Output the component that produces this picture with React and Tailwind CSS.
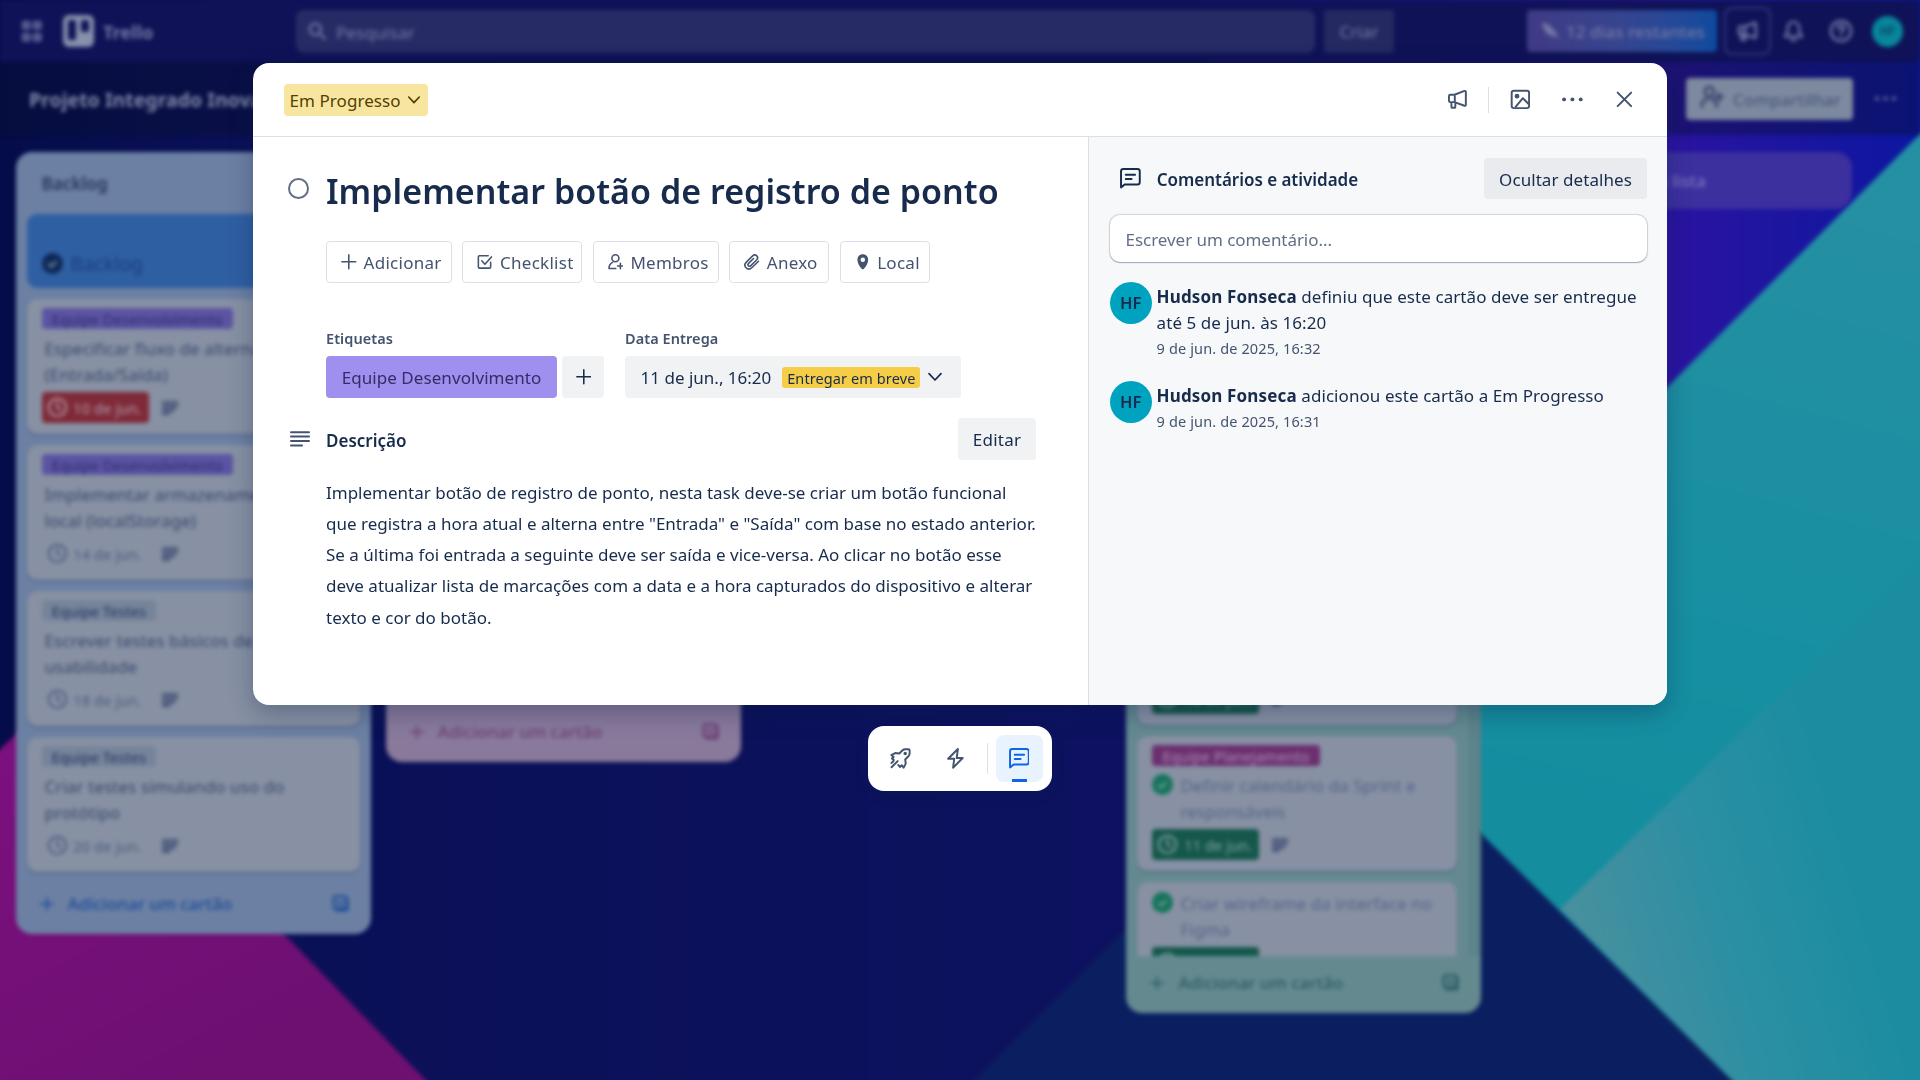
import React from "react";

const svgBase = { fill: "none", stroke: "currentColor", strokeLinecap: "round", strokeLinejoin: "round" };

function Icon({ className = "size-[20.8px]", w = 1.5, children }) {
  return (
    <svg viewBox="0 0 16 16" strokeWidth={w} className={`shrink-0 ${className}`} {...svgBase}>
      {children}
    </svg>
  );
}

const Plus = (p) => <Icon {...p}><path d="M8 .9v14.2M.9 8h14.2" /></Icon>;
const Chevron = (p) => <Icon {...p}><path d="M2 4.6 8 11l6-6.4" /></Icon>;
const Megaphone = (p) => (
  <Icon {...p}>
    <path d="M2.6 4.4h3.2l7.6-2.9c.6-.2 1.1.1 1.1.7v10c0 .6-.5.9-1.1.7l-7.6-2.8H2.6c-.6 0-1.1-.5-1.1-1.1V5.5c0-.6.5-1.1 1.1-1.1ZM6 4.4v5.7M3.4 10.3v3.5c0 .4.3.7.7.7h1.6c.4 0 .7-.3.7-.7v-3.3" />
  </Icon>
);
const Picture = (p) => (
  <Icon {...p}>
    <rect x="1.3" y="1.3" width="13.4" height="13.4" rx="1.6" />
    <circle cx="5.4" cy="5.5" r="1.1" fill="currentColor" />
    <path d="m4 14.2 5.9-7.1 4.6 4.6" strokeLinecap="butt" />
  </Icon>
);
const Dots = (p) => (
  <Icon {...p}>
    <g fill="currentColor" stroke="none">
      <circle cx="1.6" cy="8" r="1.5" /><circle cx="8" cy="8" r="1.5" /><circle cx="14.4" cy="8" r="1.5" />
    </g>
  </Icon>
);
const Close = (p) => <Icon {...p}><path d="m2.8 2.8 10.4 10.4M13.2 2.8 2.8 13.2" /></Icon>;
const Comment = (p) => (
  <Icon {...p}>
    <path d="M.8 14.9V2.6c0-1 .8-1.8 1.8-1.8h10.8c1 0 1.8.8 1.8 1.8v8.3c0 1-.8 1.8-1.8 1.8H3.6L.8 14.9ZM4.4 5.2h7.2M4.4 8.4h4.5" />
  </Icon>
);
const CheckSquare = (p) => (
  <Icon {...p}>
    <path d="M14 8.6v4.7c0 .7-.5 1.2-1.2 1.2H2.6c-.7 0-1.2-.5-1.2-1.2V2.9c0-.7.5-1.2 1.2-1.2h8.9M4.9 7l3.2 3.5L14.8 3" />
  </Icon>
);
const MemberAdd = (p) => (
  <Icon {...p}>
    <circle cx="7.6" cy="4.4" r="3.6" />
    <path d="M8 14.9H1c0-3 1-5 3.6-6.3M12.7 9.4v5.8M9.8 12.3h5.8" />
  </Icon>
);
const Invite = (p) => (
  <Icon {...p}>
    <path d="M6.2 1.2c1.700 0 2.900 1.300 2.900 3.100S7.900 7.900 6.200 7.900 3.300 6.100 3.300 4.300s1.200-3.100 2.900-3.100ZM1.200 14.500c0-3 1.600-4.600 3.400-4.900M11.200 14.500c0-3-1.600-4.600-3.400-4.900M12.700 5.500v5M10.400 8h4.700" />
  </Icon>
);
const Clip = (p) => (
  <Icon {...p}>
    <path d="m14.9 7.4-6.6 6.4c-2 1.9-4.6 1.9-6.2.3-1.6-1.6-1.5-4 .3-5.8l6.2-6.1c1.4-1.4 3.3-1.4 4.5-.3 1.2 1.2 1.1 3-.2 4.3l-5.8 5.7c-.8.8-1.9.8-2.6.2-.7-.7-.6-1.7.2-2.5l5.1-5" />
  </Icon>
);
const Pin = (p) => (
  <Icon {...p}>
    <path fill="currentColor" stroke="none" fillRule="evenodd" d="M8 .3c3.100 0 5.500 2.300 5.500 5.500 0 3.800-2.500 7.400-4.600 9.500-.5.500-1.300.5-1.800 0C5 13.200 2.500 9.600 2.500 5.800 2.500 2.600 4.900.3 8 .3Zm0 3.200a2.300 2.300 0 1 0 0 4.600 2.300 2.300 0 0 0 0-4.600Z" />
  </Icon>
);
const Rocket = (p) => (
  <Icon {...p}>
    <path d="M2.900 9.300 1.500 8.100 2.800 6.900 1 5.400 4 3.900l3.100.3 2.600-2.500c.6-.6 1.300-.8 2.100-.8h2.300c.6 0 1 .4 1 1v2.100c0 .9-.3 1.700-.9 2.300l-2.500 2.500.4 3.200-1.600 3.100-1.500-1.900-1.300 1.400-1.300-1.500M1.200 14.800l4.700-4.700M1.100 11.600l1.600-1.600" />
    <circle cx="11.700" cy="4.300" r=".6" fill="currentColor" />
  </Icon>
);
const Bolt = (p) => <Icon {...p}><path d="M9.900.8 2.400 8.300h4.700l-.9 6.900 7.400-7.500H9L9.900.8Z" /></Icon>;
const Clock = (p) => <Icon {...p}><circle cx="8" cy="8" r="6.700" /><path d="M8 4v4.200l2.200 1.500" /></Icon>;
const Template = (p) => (
  <Icon {...p}>
    <rect x="1.500" y="1.500" width="12" height="11" rx="1.500" />
    <path d="M4 14.300h9.500c.6 0 1-.4 1-1V4M5 6.800l2.500 1.200L10 6.800" />
  </Icon>
);
const Done = ({ className }) => (
  <svg viewBox="0 0 16 16" className={`size-[21px] shrink-0 ${className}`}>
    <circle cx="8" cy="8" r="8" fill="currentColor" />
    <path d="m4.800 8.200 2.300 2.200 4-4.300" fill="none" stroke="#7f9fa0" strokeWidth="1.400" />
  </svg>
);

/* ---------- board behind the dialog ---------- */

function Wallpaper() {
  return (
    <svg className="absolute -left-5 -top-5 h-[1120px] w-[1960px] blur-[2px]" viewBox="-20 -20 1960 1120" aria-hidden="true">
      <defs>
        <linearGradient id="navy" x1="0" y1="0" x2="1" y2="0">
          <stop offset="0" stopColor="#040c48" />
          <stop offset=".12" stopColor="#0a1055" />
          <stop offset=".5" stopColor="#0d125e" />
          <stop offset=".75" stopColor="#0e1166" />
        </linearGradient>
        <linearGradient id="violet" x1="1340" y1="0" x2="1920" y2="0" gradientUnits="userSpaceOnUse">
          <stop offset="0" stopColor="#1b1182" />
          <stop offset=".55" stopColor="#2b14a0" />
          <stop offset="1" stopColor="#0c17a0" />
        </linearGradient>
        <linearGradient id="magenta" x1="0" y1="700" x2="200" y2="1080" gradientUnits="userSpaceOnUse">
          <stop offset="0" stopColor="#7e1080" />
          <stop offset="1" stopColor="#6d1072" />
        </linearGradient>
        <linearGradient id="teal" x1="1800" y1="200" x2="1620" y2="860" gradientUnits="userSpaceOnUse">
          <stop offset="0" stopColor="#258fa3" />
          <stop offset=".7" stopColor="#168fa2" />
          <stop offset="1" stopColor="#148d9f" />
        </linearGradient>
        <linearGradient id="teal2" x1="1580" y1="920" x2="1850" y2="840" gradientUnits="userSpaceOnUse">
          <stop offset="0" stopColor="#46909f" />
          <stop offset=".5" stopColor="#2b8fa3" />
          <stop offset="1" stopColor="#1b8da1" />
        </linearGradient>
      </defs>
      <rect x="-20" y="-20" width="1960" height="1120" fill="url(#navy)" />
      <path d="M1200-20h740v140L1300 760Z" fill="url(#violet)" />
      <path d="M-20 768 55 698 445 1100H-20Z" fill="url(#magenta)" />
      <path d="M955 1100 1350 705 1760 1100Z" fill="#0b1f60" />
      <path d="M1940 114 1350 705 1752 1100H1940Z" fill="url(#teal)" />
      <path d="M1940 538 1560 909 1752 1100H1940Z" fill="url(#teal2)" />
    </svg>
  );
}

function TopBar() {
  return (
    <header className="flex h-[62px] w-full shrink-0 items-center bg-[#0f1257] text-[#7377a4]">
      <svg viewBox="0 0 20 21" className="ml-[22px] h-[21px] w-5 shrink-0" fill="none" stroke="currentColor" strokeWidth="2.600">
        <rect x="1.500" y="1.500" width="5.500" height="5.500" /><rect x="12.500" y="1.500" width="5.500" height="5.500" />
        <rect x="1.500" y="13.500" width="5.500" height="5.500" /><rect x="12.500" y="13.500" width="5.500" height="5.500" />
      </svg>
      <div className="ml-[21px] flex h-[32px] w-[31px] justify-between rounded-[6px] bg-[#8890ac] p-[5px]">
        <div className="h-[20px] w-[8px] rounded-[2px] bg-[#111457]" />
        <div className="h-[12px] w-[8px] rounded-[2px] bg-[#111457]" />
      </div>
      <div className="ml-[9px] w-[193px] pt-[1px] text-[18px] font-bold">Trello</div>
      <div className="flex h-[43px] w-[1019px] items-center gap-[10px] rounded-[8px] bg-[#272b65] pl-[12px]">
        <svg viewBox="0 0 16 16" className="size-[18px]" strokeWidth="2" {...svgBase}><circle cx="6.500" cy="6.500" r="5" /><path d="m10.500 10.500 4.500 4.500" /></svg>
        <span className="pt-[3px]">Pesquisar</span>
      </div>
      <div className="ml-[9px] flex h-[43px] w-[70px] items-center justify-center rounded-[4px] bg-[#252961] pt-[2px]">Criar</div>
      <div className="ml-[133px] flex h-[42px] w-[190px] items-center gap-[6px] rounded-[4px] bg-linear-to-r from-[#403a85] via-[#35458f] to-[#0c4b9f] pl-[15px]">
        <svg viewBox="0 0 16 16" className="size-[18px]" fill="currentColor"><path d="M0 1c3-.5 8 2 10 6l3 1-1 2 4 5-6-2.500C4 12 1 6 0 1Z" /></svg>
        <span className="pt-[2px] font-medium">12 dias restantes</span>
      </div>
      <div className="ml-[7px] flex h-[48px] w-[47px] items-center justify-center rounded-[8px] border-2 border-[#34357f]">
        <Megaphone w={2} />
      </div>
      <svg viewBox="0 0 16 16" className="ml-[11px] size-[23px]" strokeWidth="1.700" {...svgBase}><path d="M8 1.300c-2.600 0-4 2-4 4.200v2.700L2 11.500h12l-2-3.300V5.500c0-2.200-1.400-4.200-4-4.200ZM6.500 14h3" /></svg>
      <svg viewBox="0 0 16 16" className="ml-[24px] size-[24px]" strokeWidth="1.700" {...svgBase}><circle cx="8" cy="8" r="6.700" /><path d="M6 6.300c0-2.600 4-2.400 4 0C10 7.800 8 7.800 8 9.300M8 11.600v.2" /></svg>
      <div className="ml-[19px] flex size-[31px] items-center justify-center rounded-full bg-[#08869b] text-[12px] font-semibold text-[#0c3f66]">HF</div>
    </header>
  );
}

function BoardBar() {
  return (
    <div className="flex h-[73px] w-full shrink-0 items-center bg-[#070f30]/40">
      <div className="ml-[29px] w-[1657px] pt-[3px] text-[19.400px] font-bold text-[#8289aa]">Projeto Integrado Inovador</div>
      <div className="flex h-[42px] w-[167px] items-center gap-[9px] rounded-[4px] bg-[#7d899f] pl-[14px] text-[#4a5878]">
        <Invite className="mb-[4px] size-[24px] text-[#33416a]" w={1.800} />
        <span className="pt-[3px] font-medium tracking-normal">Compartilhar</span>
      </div>
      <Dots className="ml-[22px] size-[21px] text-[#7377a4]" />
    </div>
  );
}

function Due({ tone = "", text }) {
  return (
    <div className="flex items-center">
      <div className={`flex h-[31px] w-[107px] items-center gap-[6px] rounded-[4px] pl-[5px] text-[14.500px] tracking-[0.010em] ${tone}`}>
        <Clock className="size-[20.800px]" /> {text}
      </div>
      <svg viewBox="0 0 16 14" className="ml-[13px] h-[14px] w-4 text-[#3f4d73]" stroke="currentColor" strokeWidth="2.600"><path d="M0 1.500h16M0 5.300h16M0 9.100h13M0 12.700h8" /></svg>
    </div>
  );
}

function Card({ tag, tagTone, lines, due, dueTone, done }) {
  return (
    <div className="h-[135px] shrink-0 rounded-[10px] bg-[#8791a3] pl-[15px] pt-[9px] shadow-[0_1px_2px_#44557d]">
      {tag && <div className={`mb-[7px] flex h-[21px] w-fit items-center rounded-[4px] px-[10px] text-[14.500px] tracking-[0.008em] ${tagTone}`}>{tag}</div>}
      <div className={`flex gap-[7px] leading-[26px] text-[#3b496f] ${done ? "" : "pl-[3px]"}`}>
        {done && <Done className="mt-[1px] text-[#14745b]" />}
        <div className={done ? "text-[#56648a]" : ""}>{lines.map((l) => <div key={l}>{l}</div>)}</div>
      </div>
      <div className="mt-[4px]"><Due text={due} tone={dueTone} /></div>
    </div>
  );
}

function AddCard({ tone }) {
  return (
    <div className={`flex shrink-0 items-center pl-[24px] pr-[22px] font-medium ${tone}`}>
      <Plus className="size-[14px]" w={2} />
      <span className="ml-[14px] flex-1 pt-[1px] tracking-normal">Adicionar um cartão</span>
      <Template className="size-[17px]" w={2.300} />
    </div>
  );
}

const backlog = [
  { tag: "Equipe Desenvolvimento", tagTone: "bg-[#5c54a3] text-[#2e2a6c]", lines: ["Especificar fluxo de alternância", "(Entrada/Saída)"], due: "10 de jun.", dueTone: "bg-[#7f2a39] text-[#b49aa8]" },
  { tag: "Equipe Desenvolvimento", tagTone: "bg-[#5c54a3] text-[#2e2a6c]", lines: ["Implementar armazenamento", "local (localStorage)"], due: "14 de jun.", dueTone: "text-[#4d5b7f]" },
  { tag: "Equipe Testes", tagTone: "bg-[#76849b] text-[#24355f]", lines: ["Escrever testes básicos de", "usabilidade"], due: "18 de jun.", dueTone: "text-[#4d5b7f]" },
  { tag: "Equipe Testes", tagTone: "bg-[#76849b] text-[#24355f]", lines: ["Criar testes simulando uso do", "protótipo"], due: "20 de jun.", dueTone: "text-[#4d5b7f]" },
];

const finished = [
  { tag: "Equipe Planejamento", lines: ["Definir escopo do", "projeto"], due: "10 de jun." },
  { tag: "Equipe Planejamento", lines: ["Definir calendário da Sprint e", "responsáveis"], due: "11 de jun." },
  { lines: ["Criar wireframe da interface no", "Figma"], due: "" },
];

function Board() {
  return (
    <main className="flex flex-1 items-start gap-[15.300px] pl-[15.500px] pt-[17px]">
      <section className="flex h-[782px] w-[355px] shrink-0 flex-col rounded-[16px] bg-[#6c80a3]">
        <div className="flex h-[62px] shrink-0 items-center pl-[26px] pt-[2px] font-semibold text-[#27375f]">Backlog</div>
        <div className="flex flex-1 flex-col gap-[11px] px-[11px]">
          <div className="flex h-[74px] shrink-0 items-end gap-[8px] rounded-[10px] bg-[#2f5fa3] pb-[11px] pl-[15px] text-[19.500px] leading-[26px] text-[#1a3d7d]">
            <Done className="mb-[3px] text-[#0d2857]" /> Backlog
          </div>
          {backlog.map((c) => <Card key={c.lines[0]} {...c} />)}
        </div>
        <div className="h-[62px] pt-[18px]"><AddCard tone="text-[#1e4e98]" /></div>
      </section>
      <section className="flex h-[610px] w-[355px] shrink-0 flex-col justify-end rounded-[16px] bg-[#897a9b]">
        <div className="h-[62px] pt-[18px]"><AddCard tone="text-[#6c3f76]" /></div>
      </section>
      <section className="h-[500px] w-[355px] shrink-0 rounded-[16px] bg-[#85829a]" />
      <section className="flex h-[861px] w-[355px] shrink-0 flex-col rounded-[16px] bg-[#648a90]">
        <div className="flex flex-1 items-end justify-between overflow-hidden pl-[11px]">
          <div className="flex h-[366px] w-[320px] flex-col gap-[11px]">
            {finished.map((c) => (
              <Card key={c.lines[0]} {...c} done tagTone="bg-[#6c2f6f] text-[#a58cb2]" dueTone="bg-[#15574b] text-[#82a39f]" />
            ))}
          </div>
          <div className="h-full w-[13px] bg-[#5d838b]" />
        </div>
        <div className="h-[57px] pt-[13px]"><AddCard tone="text-[#2c5c64]" /></div>
      </section>
      <section className="flex h-[57px] w-[355px] shrink-0 items-center gap-[13px] rounded-[16px] bg-[#3c309f] pl-[17px] font-medium text-[#7d78bd]">
        <Plus className="size-[14px]" w={2} /> Adicionar outra lista
      </section>
    </main>
  );
}

/* ---------- dialog ---------- */

function DialogHeader() {
  return (
    <div className="flex h-[74px] shrink-0 items-center border-b border-[#dcdfe4] pl-[31px] pr-[32px] text-[#44546f]">
      <div className="flex h-[32px] w-[144px] items-center justify-between rounded-[4px] bg-[#f8e6a0] pl-[5.500px] pr-[7px] text-[#533f04]">
        <span className="pt-[3px]">Em Progresso</span>
        <Chevron className="size-[14px]" w={1.900} />
      </div>
      <div className="ml-auto flex items-center">
        <Megaphone />
        <div className="ml-[20px] h-[26px] w-px bg-[#dcdfe4]" />
        <Picture className="ml-[21px] size-[20.800px]" />
        <Dots className="ml-[32px] size-[20.800px]" />
        <Close className="ml-[31px] size-[20.800px]" />
      </div>
    </div>
  );
}

const actions = [
  { label: "Adicionar", Glyph: Plus, width: "w-[126px]" },
  { label: "Checklist", Glyph: CheckSquare, width: "w-[120px]" },
  { label: "Membros", Glyph: MemberAdd, width: "w-[126px]" },
  { label: "Anexo", Glyph: Clip, width: "w-[100px]" },
  { label: "Local", Glyph: Pin, width: "w-[90px]" },
];

function Details() {
  return (
    <div className="w-[835px] shrink-0 pl-[34px] pr-[52px] pt-[27px]">
      <div className="flex">
        <div className="ml-[1px] mt-[14px] size-[21px] shrink-0 rounded-full border-2 border-[#626f86]" />
        <h1 className="ml-[17px] whitespace-nowrap text-[34px] font-semibold leading-[54px] tracking-[0.001em] text-[#172b4d]">Implementar botão de registro de ponto</h1>
      </div>

      <div className="pl-[39px]">
        <div className="mt-[23px] flex gap-[10.400px] text-[#44546f]">
          {actions.map(({ label, Glyph, width }) => (
            <div key={label} className={`flex h-[42px] shrink-0 items-center gap-[7px] rounded-[4px] border border-[#dcdfe4] pl-[14px] tracking-[0.016em] ${width}`}>
              <Glyph className="size-[15.600px]" w={1.600} />
              <span className="pt-[1px]">{label}</span>
            </div>
          ))}
        </div>

        <div className="mt-[45px] flex gap-[21px]">
          <div>
            <div className="h-[28px] text-[14.500px] font-semibold leading-[20px] text-[#44546f]">Etiquetas</div>
            <div className="flex gap-[5px]">
              <div className="flex h-[42px] w-[231px] items-center justify-center rounded-[4px] bg-[#9f8fef] pt-[1px] text-[#352c63]">Equipe Desenvolvimento</div>
              <div className="flex size-[42px] items-center justify-center rounded-[4px] bg-[#f1f2f4] pl-[1px] text-[#172b4d]"><Plus className="size-[15.600px]" w={1.600} /></div>
            </div>
          </div>
          <div>
            <div className="h-[28px] text-[14.500px] font-semibold leading-[20px] text-[#44546f]">Data Entrega</div>
            <div className="flex h-[42px] w-[336px] items-center rounded-[4px] bg-[#f1f2f4] pl-[15.600px] text-[#172b4d]">
              <span className="pt-[1px] tracking-normal">11 de jun., 16:20</span>
              <span className="ml-[11px] flex h-[21px] w-[138px] items-center justify-center rounded-[3px] bg-[#f5cd47] pt-[1px] text-[14.500px] tracking-[0.007em]">Entregar em breve</span>
              <Chevron className="ml-[7px] size-[16px]" w={1.700} />
            </div>
          </div>
        </div>
      </div>

      <div className="mt-[20px] flex items-center">
        <svg viewBox="0 0 20 16" className="ml-[3px] h-4 w-5 text-[#44546f]" stroke="currentColor" strokeWidth="2" strokeLinecap="round"><path d="M1 1.200h18M1 5.600h18M1 10h18M1 14.400h11" /></svg>
        <h2 className="ml-[16px] pt-[3px] font-semibold tracking-normal text-[#172b4d]">Descrição</h2>
        <div className="ml-auto flex h-[42px] w-[78px] items-center justify-center rounded-[4px] bg-[#f1f2f4] pt-[2px] tracking-[0.014em] text-[#172b4d]">Editar</div>
      </div>
      <p className="mt-[16.800px] whitespace-nowrap pl-[39px] leading-[31.200px] tracking-[0em] text-[#172b4d]">
        Implementar botão de registro de ponto, nesta task deve-se criar um botão funcional<br />
        que registra a hora atual e alterna entre "Entrada" e "Saída" com base no estado anterior.<br />
        Se a última foi entrada a seguinte deve ser saída e vice-versa. Ao clicar no botão esse<br />
        deve atualizar lista de marcações com a data e a hora capturados do dispositivo e alterar<br />
        texto e cor do botão.
      </p>
    </div>
  );
}

function Entry({ children, time }) {
  return (
    <div className="flex gap-[5px]">
      <div className="flex size-[41.600px] shrink-0 items-center justify-center rounded-full bg-[#00a3bf] text-[16.500px] font-semibold text-[#172b4d]">HF</div>
      <div className="whitespace-nowrap pt-[2.400px] leading-[26px] text-[#172b4d]">
        <div><b className="font-bold tracking-[0.009em]">Hudson Fonseca</b> {children}</div>
        <div className="-mt-[1px] text-[14.500px] tracking-[0.009em] text-[#44546f]">{time}</div>
      </div>
    </div>
  );
}

function Activity() {
  return (
    <aside className="flex-1 border-l border-[#dcdfe4] bg-[#f7f8f9] pl-[21px] pr-[20px] pt-[21px] text-[#172b4d]">
      <div className="flex items-center">
        <Comment className="ml-[10px] size-[20.800px]" />
        <h2 className="ml-[16px] pt-[2px] font-semibold tracking-[-0.002em]">Comentários e atividade</h2>
        <div className="ml-auto flex h-[41px] w-[163px] items-center justify-center rounded-[4px] bg-[#e9ebee] pt-[2px]">Ocultar detalhes</div>
      </div>
      <div className="mt-[16px] flex h-[47px] items-center rounded-[10px] bg-white pl-[15.600px] pt-[2px] tracking-[-0.003em] text-[#626f86] shadow-[0_1px_1px_#091e4240,0_0_1px_1px_#091e4228]">Escrever um comentário...</div>
      <div className="mt-[20px] flex flex-col gap-[19.600px]">
        <Entry time="9 de jun. de 2025, 16:32">definiu que este cartão deve ser entregue<br />até 5 de jun. às 16:20</Entry>
        <Entry time="9 de jun. de 2025, 16:31">adicionou este cartão a Em Progresso</Entry>
      </div>
    </aside>
  );
}

function Dock() {
  return (
    <nav className="mt-[21px] flex h-[65px] w-[184px] shrink-0 items-center rounded-[16px] bg-white pl-[22px] text-[#44546f] shadow-[0_4px_12px_#091e4240]">
      <Rocket />
      <Bolt className="ml-[34px] size-[20.800px]" />
      <div className="ml-[21px] h-[31px] w-px bg-[#dcdfe4]" />
      <div className="ml-[8px] flex h-[47px] w-[47px] flex-col items-center rounded-[8px] bg-[#e9f2ff] pt-[13px] text-[#0c66e4]">
        <Comment />
        <div className="mt-auto h-[3px] w-[15px] bg-[#0c66e4]" />
      </div>
    </nav>
  );
}

export default function App() {
  return (
    <div className="relative h-[1080px] w-[1920px] overflow-hidden bg-[#0c115a] font-['Noto_Sans','Open_Sans',sans-serif] text-[17px] leading-[26px] tracking-[0.004em]">
      <Wallpaper />
      <div className="absolute inset-0 h-[1080px] w-[1920px] blur-[2px]">
        <div className="flex h-full flex-col whitespace-nowrap">
          <TopBar />
          <BoardBar />
          <Board />
        </div>
      </div>
      <div className="absolute inset-0 flex flex-col items-center pt-[63px]">
        <div className="flex h-[642px] w-[1414px] shrink-0 flex-col overflow-hidden rounded-[16px] bg-white shadow-[0_8px_24px_#091e4250]">
          <DialogHeader />
          <div className="flex flex-1">
            <Details />
            <Activity />
          </div>
        </div>
        <Dock />
      </div>
    </div>
  );
}
